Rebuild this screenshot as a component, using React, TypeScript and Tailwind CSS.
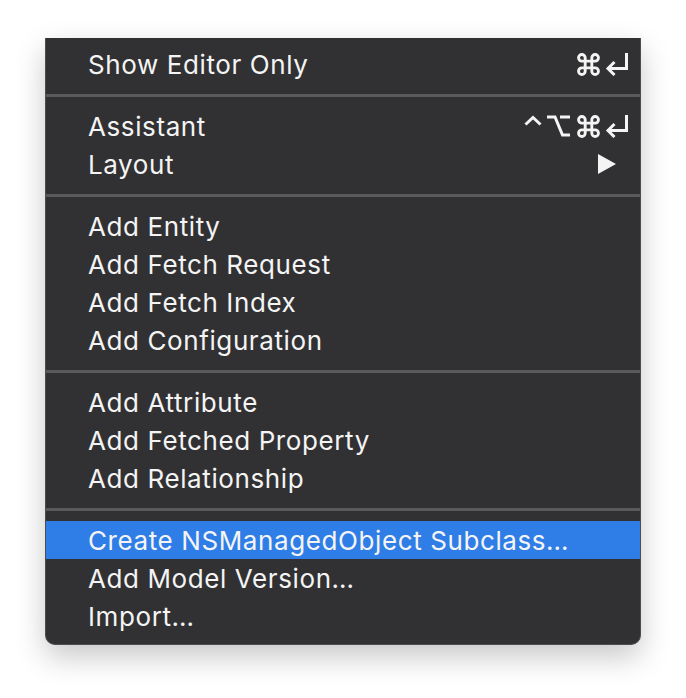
import React from "react";

type Item = { label: string; shortcut?: "cmdReturn" | "ctrlOptCmdReturn" | "submenu"; active?: boolean };

const groups: Item[][] = [
  [{ label: "Show Editor Only", shortcut: "cmdReturn" }],
  [
    { label: "Assistant", shortcut: "ctrlOptCmdReturn" },
    { label: "Layout", shortcut: "submenu" },
  ],
  [
    { label: "Add Entity" },
    { label: "Add Fetch Request" },
    { label: "Add Fetch Index" },
    { label: "Add Configuration" },
  ],
  [
    { label: "Add Attribute" },
    { label: "Add Fetched Property" },
    { label: "Add Relationship" },
  ],
  [
    { label: "Create NSManagedObject Subclass…", active: true },
    { label: "Add Model Version…" },
    { label: "Import…" },
  ],
];

// macOS key glyphs drawn as strokes
function CtrlKey() {
  return (
    <svg width="18" height="23" viewBox="0 0 18 23" fill="none">
      <path d="M1.5 9.5L9 2.5L16.5 9.5" stroke="currentColor" strokeWidth="3" />
    </svg>
  );
}

function OptKey() {
  return (
    <svg width="23" height="23" viewBox="0 0 23 23" fill="none" className="ml-[5px]">
      <path d="M0 2h8l7.5 18H23" stroke="currentColor" strokeWidth="3" />
      <path d="M13 2h10" stroke="currentColor" strokeWidth="3" />
    </svg>
  );
}

function CmdKey() {
  return (
    <svg width="23" height="23" viewBox="1.6 1.6 20.8 20.8" fill="none" className="ml-[7px]">
      <path
        d="M15 6v12a3 3 0 1 0 3-3H6a3 3 0 1 0 3 3V6a3 3 0 1 0-3 3h12a3 3 0 1 0-3-3"
        stroke="currentColor"
        strokeWidth="2.6"
      />
    </svg>
  );
}

function ReturnKey() {
  return (
    <svg width="25" height="23" viewBox="0 0 25 23" fill="none" className="ml-[4px]">
      <path d="M22.5 0v15.5H4" stroke="currentColor" strokeWidth="3" />
      <path d="M10.5 9L4 15.5L10.5 22" stroke="currentColor" strokeWidth="3" />
    </svg>
  );
}

function Shortcut({ kind }: { kind: Item["shortcut"] }) {
  if (kind === "submenu") {
    return (
      <svg width="18" height="20" viewBox="0 0 18 20" className="mr-[24px]">
        <path d="M0 0L18 10L0 20Z" fill="currentColor" />
      </svg>
    );
  }
  return (
    <div className="mr-[11px] flex items-center">
      {kind === "ctrlOptCmdReturn" && (
        <>
          <CtrlKey />
          <OptKey />
        </>
      )}
      <CmdKey />
      <ReturnKey />
    </div>
  );
}

function Row({ item }: { item: Item }) {
  return (
    <div
      className={`flex h-[38px] items-center justify-between pl-[42px] ${
        item.active ? "bg-[#2f7de7]" : ""
      }`}
    >
      <span className="tracking-[0.6px]">{item.label}</span>
      {item.shortcut && <Shortcut kind={item.shortcut} />}
    </div>
  );
}

export default function App() {
  return (
    <div className="h-[698px] w-[686px] overflow-hidden bg-white pl-[45px] pt-[38px]">
      <div className="flex w-[596px] flex-col rounded-b-[10px] border-x-[1.5px] border-b-[1.5px] border-[#4d4d4f] bg-[#313133] pb-[9px] pt-[7px] font-['Inter',sans-serif] text-[26px] text-[#f4f4f4] shadow-[0_12px_30px_rgba(0,0,0,0.22)]">
        {groups.map((group, gi) => (
          <React.Fragment key={gi}>
            {gi > 0 && (
              <div className="pb-[10px] pt-[11px]">
                <div className="h-[3px] bg-[#5a5a5c]" />
              </div>
            )}
            {group.map((item) => (
              <Row key={item.label} item={item} />
            ))}
          </React.Fragment>
        ))}
      </div>
    </div>
  );
}
